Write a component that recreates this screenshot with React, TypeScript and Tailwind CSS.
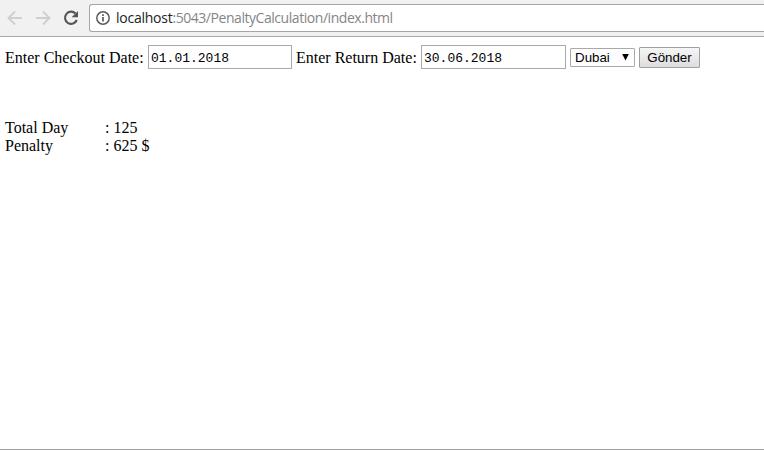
import React from 'react';

function Toolbar() {
  return (
    <header className="flex h-[37px] shrink-0 border-b border-[#a9a9a9] bg-[#f1f1f1] pt-1">
      <nav className="flex w-[89px] shrink-0 pl-[7px]">
        <svg width="82" height="28" viewBox="7 4 82 28" fill="none">
          <path d="M22 18H9M15 11.5L8.5 18L15 24.5" stroke="#cfcfcf" strokeWidth="1.9" />
          <path d="M36 18H49M43 11.5L49.5 18L43 24.5" stroke="#cfcfcf" strokeWidth="1.9" />
          <path d="M75.5 13.5A6.1 6.1 0 1 0 76.8 20" stroke="#555" strokeWidth="2.1" />
          <path d="M78 11V17.2H71.6Z" fill="#555" />
        </svg>
      </nav>
      <div className="flex h-7 flex-1 items-center rounded-l-[3px] border border-r-0 border-[#a6a6a6] bg-white pl-[6px]">
        <svg width="14" height="14" viewBox="0 0 14 14" fill="none" className="shrink-0">
          <circle cx="7" cy="7" r="6.2" stroke="#5a5a5a" strokeWidth="1.5" />
          <path d="M7 6V10.5M7 3.3V4.9" stroke="#5a5a5a" strokeWidth="1.7" />
        </svg>
        <span className="ml-[6px] whitespace-pre font-['Open_Sans',sans-serif] text-[14px] leading-[18px] tracking-[-0.45px] text-[#858585]">
          <span className="tracking-[-0.25px] text-[#222]">localhost</span>:5043/PenaltyCalculation/index.html
        </span>
      </div>
    </header>
  );
}

function DateInput({ value, className }: { value: string; className: string }) {
  return (
    <input
      readOnly
      value={value}
      className={`h-[24px] shrink-0 self-start rounded-none border border-[#a9a9a9] bg-white pl-[2px] pt-[2px] font-['Liberation_Mono',monospace] text-[13px] text-black outline-none ${className}`}
    />
  );
}

export default function App() {
  return (
    <div className="flex h-[450px] w-[764px] flex-col overflow-hidden border-b border-[#a0a0a0] bg-white font-['Liberation_Serif',serif] text-[16px] leading-[18px] text-black">
      <Toolbar />
      <main className="pl-[5px] pt-2">
        <form className="flex h-[25px] items-center whitespace-nowrap">
          <label className="w-[143px] shrink-0">Enter Checkout Date:</label>
          <DateInput value="01.01.2018" className="w-[144px]" />
          <label className="ml-[4px] w-[125px] shrink-0">Enter Return Date:</label>
          <DateInput value="30.06.2018" className="w-[145px]" />
          <div className="ml-1 flex h-[19px] w-[65px] shrink-0 items-center justify-between rounded-[1px] border border-[#a9a9a9] bg-white pl-[4px] pr-[5px] font-['Liberation_Sans',sans-serif] text-[13.33px] leading-[17px]">
            <span>Dubai</span>
            <svg width="7" height="7" viewBox="0 0 7 7"><path d="M0.2 0H6.8L3.5 6.5Z" fill="#000" /></svg>
          </div>
          <button type="button" className="ml-1 h-[21px] w-[61px] shrink-0 rounded-[1px] border border-[#a0a0a0] bg-linear-to-b from-[#f6f6f6] to-[#dddddd] font-['Liberation_Sans',sans-serif] text-[13.33px] leading-[18px]">
            Gönder
          </button>
        </form>
        <dl className="mt-[49px] grid grid-cols-[100px_auto]">
          <dt>Total Day</dt><dd>: 125</dd>
          <dt>Penalty</dt><dd>: 625 $</dd>
        </dl>
      </main>
    </div>
  );
}
